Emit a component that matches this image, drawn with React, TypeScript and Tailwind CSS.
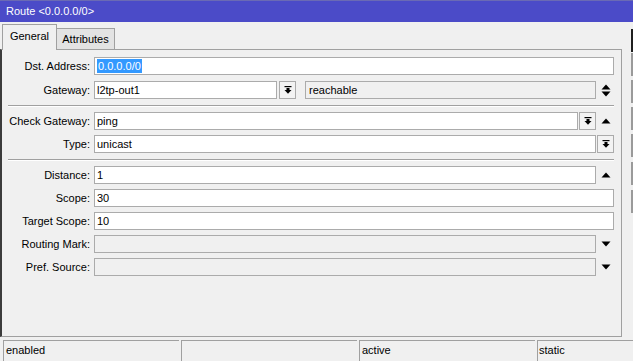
import type { ReactNode } from "react";

function DropIcon() {
  return (
    <svg width="8" height="8" viewBox="0 0 8 8" fill="#000">
      <rect x="0.5" y="0" width="7" height="1.2" />
      <rect x="2.5" y="2" width="3" height="2" />
      <path d="M0.5 4h7L4 7.8z" />
    </svg>
  );
}

function UpIcon() {
  return (
    <svg width="10" height="6" viewBox="0 0 10 6" fill="#000">
      <path d="M0.5 5.5h9L5 0.5z" />
    </svg>
  );
}

function DownIcon() {
  return (
    <svg width="10" height="6" viewBox="0 0 10 6" fill="#000">
      <path d="M0.5 0.5h9L5 5.5z" />
    </svg>
  );
}

function UpDownIcon() {
  return (
    <svg width="10" height="13" viewBox="0 0 10 13" fill="#000">
      <path d="M0.5 5.5h9L5 0.5z" />
      <path d="M0.5 7.5h9L5 12.5z" />
    </svg>
  );
}

function Field({ value, gray, selected, className = "" }: { value?: string; gray?: boolean; selected?: boolean; className?: string }) {
  return (
    <div
      className={`flex h-[18px] items-center border border-[#ababab] pl-[2px] ${gray ? "bg-[#f0f0f0]" : "bg-white"} ${className}`}
    >
      {selected ? <span className="bg-[#3399ff] px-[1px] leading-[14px] text-white">{value}</span> : value}
    </div>
  );
}

function DropButton() {
  return (
    <div className="flex h-[18px] w-[17px] shrink-0 items-center justify-center border border-[#ababab] bg-[#f3f3f3]">
      <DropIcon />
    </div>
  );
}

function Side({ children }: { children?: ReactNode }) {
  return <div className="ml-[1px] flex h-[18px] w-[17px] shrink-0 items-center justify-center">{children}</div>;
}

function Row({ label, className = "", children }: { label: string; className?: string; children: ReactNode }) {
  return (
    <div className={`flex h-[18px] items-center ${className}`}>
      <div className="w-[88px] shrink-0 text-right">{label}</div>
      <div className="ml-[4px] flex flex-1 items-center">{children}</div>
    </div>
  );
}

function Separator({ className = "" }: { className?: string }) {
  return <div className={`ml-[6px] h-[2px] border-t border-b border-t-[#a0a0a0] border-b-white ${className}`} />;
}

const sideButtons = [
  { top: "mt-[7px]", color: "bg-[#1e1e1e]" },
  { top: "mt-[1px]", color: "bg-[#9a9a9a]" },
  { top: "mt-[4px]", color: "bg-[#9a9a9a]" },
  { top: "mt-[4px]", color: "bg-[#9a9a9a]" },
  { top: "mt-[4px]", color: "bg-[#9a9a9a]" },
  { top: "mt-[5px]", color: "bg-[#9a9a9a]" },
  { top: "mt-[5px]", color: "bg-[#9a9a9a]" }
];

export default function App() {
  return (
    <div className="flex h-[361px] w-[633px] flex-col overflow-hidden bg-[#f0f0f0] font-['Liberation_Sans',Arial,sans-serif] text-[11px] text-black">
      <div className="flex h-[22px] shrink-0 items-center border-t border-[#6a6ab4] bg-[#4b4bc8] pl-[6px] text-white">
        Route &lt;0.0.0.0/0&gt;
      </div>

      <div className="flex h-[315px] shrink-0">
        <div className="flex w-[622px] flex-col">
          <div className="flex h-[27px] items-end pl-[2px]">
            <div className="relative z-10 -mb-px flex h-[26px] w-[55px] items-center justify-center border-x border-t border-[#a0a0a0] bg-[#f0f0f0] pb-[2px]">
              General
            </div>
            <div className="flex h-[21px] w-[58px] items-center justify-center border-r border-t border-[#a0a0a0] bg-[#e3e3e3]">
              Attributes
            </div>
          </div>

          <div className="flex flex-1 flex-col border-y border-r border-l-2 border-[#a0a0a0] border-l-[#3c3c3c] pr-[7px] pt-[7px]">
            <Row label="Dst. Address:">
              <Field value="0.0.0.0/0" selected className="flex-1" />
            </Row>

            <Row label="Gateway:" className="mt-[6px]">
              <Field value="l2tp-out1" className="w-[183px]" />
              <div className="ml-[2px]">
                <DropButton />
              </div>
              <Field value="reachable" gray className="ml-[9px] flex-1 pl-[3px]" />
              <Side>
                <UpDownIcon />
              </Side>
            </Row>

            <Separator className="mt-[6px]" />

            <Row label="Check Gateway:" className="mt-[5px]">
              <Field value="ping" className="flex-1" />
              <div className="ml-[1px]">
                <DropButton />
              </div>
              <Side>
                <UpIcon />
              </Side>
            </Row>

            <Row label="Type:" className="mt-[5px]">
              <Field value="unicast" className="flex-1" />
              <div className="ml-[1px]">
                <DropButton />
              </div>
            </Row>

            <Separator className="mt-[6px]" />

            <Row label="Distance:" className="mt-[5px]">
              <Field value="1" className="flex-1" />
              <Side>
                <UpIcon />
              </Side>
            </Row>

            <Row label="Scope:" className="mt-[5px]">
              <Field value="30" className="flex-1" />
            </Row>

            <Row label="Target Scope:" className="mt-[5px]">
              <Field value="10" className="flex-1" />
            </Row>

            <Row label="Routing Mark:" className="mt-[5px]">
              <Field gray className="flex-1" />
              <Side>
                <DownIcon />
              </Side>
            </Row>

            <Row label="Pref. Source:" className="mt-[5px]">
              <Field gray className="flex-1" />
              <Side>
                <DownIcon />
              </Side>
            </Row>
          </div>
        </div>

        <div className="ml-[9px] flex w-[2px] flex-col">
          {sideButtons.map((button, index) => (
            <div key={index} className={`h-[23px] w-[2px] ${button.top} ${button.color}`} />
          ))}
        </div>
      </div>

      <div className="mt-[3px] flex h-[21px] pl-[3px]">
        <div className="flex w-[176px] items-center border-l border-t border-[#a0a0a0] pb-[1px] pl-[2px]">enabled</div>
        <div className="ml-[2px] w-[176px] border-l border-t border-[#a0a0a0]" />
        <div className="ml-[2px] flex w-[176px] items-center border-l border-t border-[#a0a0a0] pb-[1px] pl-[2px]">active</div>
        <div className="ml-[2px] flex flex-1 items-center border-l border-t border-[#a0a0a0] pb-[1px] pl-[1px]">static</div>
      </div>
    </div>
  );
}
